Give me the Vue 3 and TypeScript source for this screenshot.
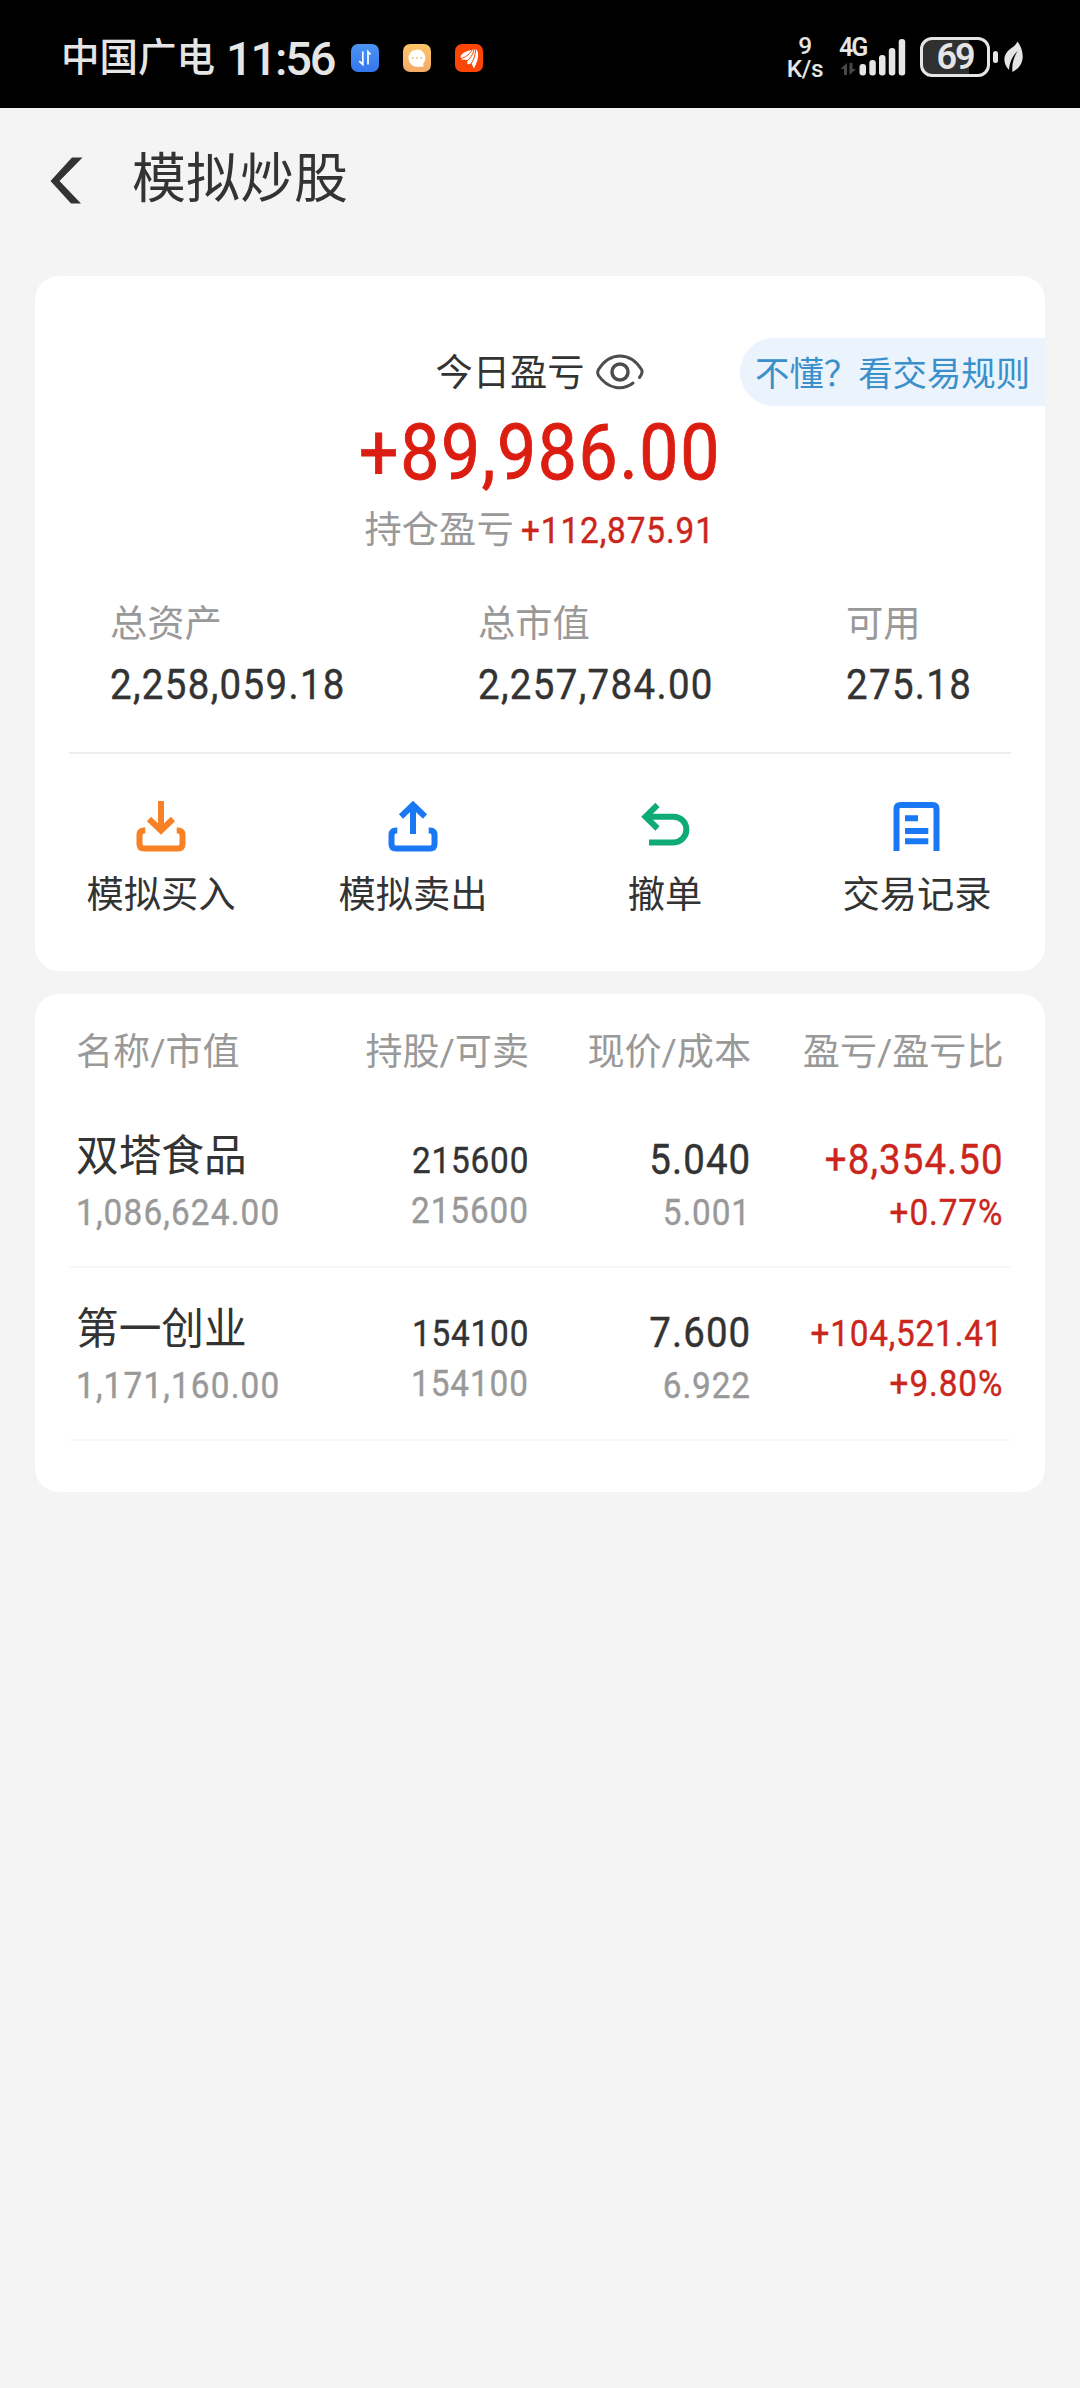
<script setup lang="ts">
interface Stat {
  label: string
  value: string
}

interface Action {
  key: 'buy' | 'sell' | 'cancel' | 'record'
  label: string
}

interface Holding {
  name: string
  marketValue: string
  shares: string
  sellable: string
  price: string
  cost: string
  profit: string
  ratio: string
}

const stats: Stat[] = [
  { label: '总资产', value: '2,258,059.18' },
  { label: '总市值', value: '2,257,784.00' },
  { label: '可用', value: '275.18' },
]

const actions: Action[] = [
  { key: 'buy', label: '模拟买入' },
  { key: 'sell', label: '模拟卖出' },
  { key: 'cancel', label: '撤单' },
  { key: 'record', label: '交易记录' },
]

const headers: string[] = ['名称/市值', '持股/可卖', '现价/成本', '盈亏/盈亏比']

const holdings: Holding[] = [
  {
    name: '双塔食品',
    marketValue: '1,086,624.00',
    shares: '215600',
    sellable: '215600',
    price: '5.040',
    cost: '5.001',
    profit: '+8,354.50',
    ratio: '+0.77%',
  },
  {
    name: '第一创业',
    marketValue: '1,171,160.00',
    shares: '154100',
    sellable: '154100',
    price: '7.600',
    cost: '6.922',
    profit: '+104,521.41',
    ratio: '+9.80%',
  },
]

// Long amounts drop to the smaller size so they stay inside their column.
const isLong = (text: string): boolean => text.length > 9
</script>

<template>
  <div class="screen">
    <header class="status">
      <span class="carrier">中国广电</span>
      <span class="clock">11:56</span>
      <div class="notices">
        <svg width="28" height="28" viewBox="0 0 28 28">
          <defs>
            <linearGradient id="blueApp" x1="0" y1="0" x2="0" y2="1">
              <stop offset="0" stop-color="#4a94f2" />
              <stop offset="1" stop-color="#3575ec" />
            </linearGradient>
          </defs>
          <rect width="28" height="28" rx="7" fill="url(#blueApp)" />
          <path d="M11.8 7.5V20.5L8.2 17.2M17 20.5V7.7L19.6 10.5" fill="none" stroke="#fff" stroke-width="1.7" />
        </svg>
        <svg width="28" height="28" viewBox="0 0 28 28">
          <defs>
            <linearGradient id="chatApp" x1="0" y1="0" x2="0" y2="1">
              <stop offset="0" stop-color="#fdc568" />
              <stop offset="1" stop-color="#f3aa68" />
            </linearGradient>
          </defs>
          <rect width="28" height="28" rx="7" fill="url(#chatApp)" />
          <path d="M14 5.500a8.600 8.600 0 1 0 0 17.200h6.300v-3a8.600 8.600 0 0 0-6.300-14.200z" fill="#fff" />
          <circle cx="9.800" cy="14" r="1" fill="#eec28c" />
          <circle cx="14" cy="14" r="1" fill="#eec28c" />
          <circle cx="18.200" cy="14" r="1" fill="#eec28c" />
        </svg>
        <svg width="28" height="28" viewBox="0 0 28 28">
          <rect width="28" height="28" rx="7" fill="#fb4605" />
          <path d="M5.500 12.500C7.500 8.500 12 6 21.500 5.500C24 9 24 15 19 24.500L16.500 19.500L12.500 20.500L12 16L6.500 15.500Z" fill="#fff" />
          <path d="M6 14.500C10 13.500 14 11 17 6M11.500 17.500C15 14.500 18 11 18.800 6M15.500 21C18.500 16 20.500 12 20.500 5.500" fill="none" stroke="#fb4605" stroke-width="1" />
        </svg>
      </div>

      <div class="speed">
        <span>9</span>
        <span>K/s</span>
      </div>
      <div class="network">
        <span class="generation">4G</span>
        <svg width="68" height="40" viewBox="0 0 68 40">
          <path d="M8 38V26L1.500 32H5V38zM10.500 26V38L17 32H13.500V26z" fill="#484848" />
          <g fill="#e5e5e5">
            <rect x="20.500" y="27" width="6.500" height="11.500" rx="3" />
            <rect x="30.300" y="23" width="6.500" height="15.500" rx="3" />
            <rect x="40" y="18" width="6.500" height="20.500" rx="3" />
            <rect x="49.800" y="11" width="6.500" height="27.500" rx="3" />
            <rect x="59.700" y="2" width="6.500" height="36.500" rx="3" />
          </g>
        </svg>
      </div>
      <div class="battery"><span>69</span></div>
      <i class="nub"></i>
      <svg class="leaf" width="20" height="32" viewBox="0 0 20 32">
        <path d="M13.500 0.500C20 9 22.500 24 8.500 31C7.500 24 9.500 16.500 13.500 10C8.500 15 5.500 21.500 5 29C-1 23 -1.500 14 5.500 8.500C9.500 5.500 12 4 13.500 0.500Z" fill="#e5e5e5" />
      </svg>
    </header>

    <nav class="titlebar">
      <svg width="33" height="47" viewBox="0 0 33 47">
        <path d="M22 0.500H32.500L9.500 24L31 46.500H21L0.500 24z" fill="#333" />
      </svg>
      <h1>模拟炒股</h1>
    </nav>

    <main>
      <section class="card summary">
        <a class="rules">不懂？看交易规则</a>
        <div class="today">
          <span>今日盈亏</span>
          <svg width="50" height="38" viewBox="0 0 50 38" fill="none" stroke="#4d4d4d" stroke-width="3" stroke-linecap="round">
            <path d="M38 30C28.500 37.500 13.500 37 3.500 22.500Q1.800 19.600 3.500 16.500C15 -1.500 35 -1.500 46.500 16.500Q48.300 19.500 44.500 24.500" />
            <circle cx="25" cy="19" r="8" stroke-width="3.500" />
          </svg>
        </div>
        <div class="amount num">+89,986.00</div>
        <div class="position">
          <span class="muted">持仓盈亏</span>
          <span class="gain num">+112,875.91</span>
        </div>

        <div class="stats">
          <div v-for="s in stats" :key="s.label" class="stat">
            <span class="stat-label">{{ s.label }}</span>
            <span class="stat-value num">{{ s.value }}</span>
          </div>
        </div>

        <div class="divider"></div>

        <div class="actions">
          <div v-for="a in actions" :key="a.key" class="action">
            <svg v-if="a.key === 'buy'" width="56" height="56" viewBox="0 0 56 56" fill="none" stroke="#f88125" stroke-width="6">
              <path d="M28 3V33" />
              <path d="M16 21L28 32.500L40 21" />
              <path d="M12.300 32.500H11Q6.500 32.500 6.500 37V46Q6.500 50.500 11 50.500H45Q49.500 50.500 49.500 46V37Q49.500 32.500 45 32.500H43.700" />
            </svg>
            <svg v-else-if="a.key === 'sell'" width="56" height="56" viewBox="0 0 56 56" fill="none" stroke="#1b78f5" stroke-width="6">
              <path d="M28 6V36" />
              <path d="M16 18.500L28 7L40 18.500" />
              <path d="M12.300 32.500H11Q6.500 32.500 6.500 37V46Q6.500 50.500 11 50.500H45Q49.500 50.500 49.500 46V37Q49.500 32.500 45 32.500H43.700" />
            </svg>
            <svg v-else-if="a.key === 'cancel'" width="56" height="56" viewBox="0 0 56 56" fill="none" stroke="#0eab76" stroke-width="6">
              <path d="M20.500 7L8.500 18.700L20.500 30.500" />
              <path d="M9 18.700H36.500A12.900 12.900 0 0 1 36.500 44.500H12" />
            </svg>
            <svg v-else width="56" height="56" viewBox="0 0 56 56" fill="none" stroke="#1b78f5" stroke-width="6">
              <path d="M7.500 53V11Q7.500 7 11.500 7H43.500Q47.500 7 47.500 11V53" />
              <path d="M16 20.200H29M16 33H39.300M16 43.200H39.300" />
            </svg>
            <span>{{ a.label }}</span>
          </div>
        </div>
      </section>

      <section class="card holdings">
        <div class="grid head">
          <span v-for="h in headers" :key="h">{{ h }}</span>
        </div>
        <div v-for="h in holdings" :key="h.name" class="grid row">
          <div class="cell">
            <span class="name">{{ h.name }}</span>
            <span class="sub num wide">{{ h.marketValue }}</span>
          </div>
          <div class="cell compact">
            <span class="main num">{{ h.shares }}</span>
            <span class="sub num">{{ h.sellable }}</span>
          </div>
          <div class="cell">
            <span class="main num">{{ h.price }}</span>
            <span class="sub num">{{ h.cost }}</span>
          </div>
          <div class="cell profit" :class="{ compact: isLong(h.profit) }">
            <span class="main num">{{ h.profit }}</span>
            <span class="sub num">{{ h.ratio }}</span>
          </div>
        </div>
      </section>
    </main>
  </div>
</template>

<style>
body {
  background: #f4f4f4;
}
</style>

<style scoped>
.screen {
  width: 1080px;
  height: 2388px;
  overflow: hidden;
  background: #f4f4f4;
  color: #333;
  font-family: Roboto, 'Noto Sans CJK SC', sans-serif;
}

span,
a {
  white-space: nowrap;
}

svg {
  display: block;
  flex: none;
}

/* Condensed figures */
.num {
  font-weight: 400;
  -webkit-text-stroke: 0.4px currentColor;
  transform: scaleX(0.9);
}

.status {
  display: flex;
  align-items: flex-start;
  box-sizing: border-box;
  height: 108px;
  padding-left: 61px;
  background: #000;
  color: #e5e5e5;
}

.carrier {
  width: 165px;
  margin-top: 28px;
  font-size: 38.5px;
  font-weight: 500;
  line-height: 60px;
}

.clock {
  width: 125px;
  margin-top: 29px;
  font-size: 47px;
  line-height: 60px;
  font-weight: 500;
  letter-spacing: -2.2px;
}

.notices {
  display: flex;
  gap: 24px;
  width: 132px;
  margin-top: 44px;
}

.speed {
  display: flex;
  flex-direction: column;
  align-items: center;
  width: 40px;
  margin: 35px 0 0 302px;
  font-size: 24.5px;
  font-weight: 500;
  line-height: 22.5px;
  letter-spacing: -0.4px;
}

.network {
  position: relative;
  width: 68px;
  margin: 37px 0 0 14px;
}

.generation {
  position: absolute;
  left: 0;
  top: -1px;
  font-size: 25px;
  font-weight: 600;
  line-height: 24px;
  letter-spacing: -2px;
}

.battery {
  box-sizing: border-box;
  width: 70px;
  height: 40px;
  margin: 37px 0 0 13px;
  border: 3px solid #e5e5e5;
  border-radius: 12px;
  background: linear-gradient(90deg, #303030 46px, #000 46px);
  text-align: center;
  font-size: 36px;
  font-weight: 600;
  line-height: 35px;
  letter-spacing: -2px;
}

.nub {
  width: 5px;
  height: 12px;
  margin: 51px 0 0 3px;
  border-radius: 3px;
  background: #e5e5e5;
}

.leaf {
  margin: 41px 0 0 6px;
}

.titlebar {
  display: flex;
  align-items: flex-start;
  height: 168px;
  padding-left: 50px;
}

.titlebar svg {
  margin-top: 49px;
}

h1 {
  margin: 37px 0 0 49px;
  font-size: 54px;
  font-weight: 400;
  line-height: 70px;
}

main {
  display: flex;
  flex-direction: column;
  gap: 23px;
  padding: 0 35px;
}

.card {
  position: relative;
  box-sizing: border-box;
  border-radius: 24px;
  background: #fff;
}

.summary {
  height: 695px;
  padding-top: 67px;
}

.rules {
  position: absolute;
  top: 62px;
  right: 0;
  box-sizing: border-box;
  width: 305px;
  height: 68px;
  padding-left: 15px;
  border-radius: 34px 0 0 34px;
  background: #ebf3fc;
  color: #3a90ca;
  font-size: 34.4px;
  line-height: 72px;
}

.today {
  display: flex;
  justify-content: center;
  align-items: center;
  gap: 10px;
  height: 60px;
  font-size: 37.3px;
  line-height: 60px;
}

.today svg {
  margin-top: -2px;
}

.amount {
  margin-top: 5px;
  color: #dc1d12;
  font-size: 77.4px;
  line-height: 90px;
  letter-spacing: 1.8px;
  text-align: center;
  -webkit-text-stroke-width: 0.9px;
}

.position {
  display: flex;
  height: 50px;
  gap: 7px;
  margin-top: 7px;
  padding-left: 329.5px;
  font-size: 37.3px;
  line-height: 50px;
}

.muted {
  color: #999;
}

.gain {
  color: #cb261c;
  font-size: 37px;
  line-height: 51px;
  letter-spacing: 1px;
  transform-origin: 0 50%;
}

.stats {
  display: grid;
  grid-template-columns: 368px 368px 1fr;
  margin-top: 44px;
  padding-left: 75px;
}

.stat {
  display: flex;
  flex-direction: column;
  align-items: flex-start;
  gap: 5px;
}

.stat-label {
  color: #999;
  font-size: 37.3px;
  line-height: 50px;
}

.stat-value {
  font-size: 42.7px;
  line-height: 60px;
  letter-spacing: 1.5px;
  transform-origin: 0 50%;
}

.divider {
  height: 2px;
  margin: 38px 34px 0;
  background: #ededed;
}

.actions {
  display: grid;
  grid-template-columns: repeat(4, 252px);
  margin-top: 44px;
}

.action {
  display: flex;
  flex-direction: column;
  align-items: center;
  gap: 16px;
  font-size: 37.3px;
  line-height: 50px;
}

.holdings {
  height: 498px;
  padding: 34px 34px 0;
}

.grid {
  display: grid;
  grid-template-columns: 230px 223px 222px 252.5px;
  padding-left: 7px;
}

.grid > :not(:first-child) {
  text-align: right;
}

.head {
  margin-bottom: 17px;
  color: #999;
  font-size: 37.1px;
  line-height: 50px;
}

.row {
  box-sizing: border-box;
  height: 173px;
  padding-top: 34px;
  border-bottom: 2px solid #f8f8f8;
}

.cell {
  display: flex;
  flex-direction: column;
  align-items: flex-end;
}

.cell:first-child {
  align-items: flex-start;
}

.cell .num {
  transform-origin: 100% 50%;
}

.cell:first-child .num {
  transform-origin: 0 50%;
}

.name {
  margin-bottom: 6px;
  font-size: 42.7px;
  line-height: 54px;
}

.main {
  font-size: 42.7px;
  line-height: 60px;
  letter-spacing: 1.2px;
}

.sub {
  color: #999;
  font-size: 37px;
  line-height: 47px;
  letter-spacing: 1px;
}

.sub.wide {
  letter-spacing: 1.3px;
}

.compact {
  padding-top: 7px;
}

.compact .main {
  font-size: 37px;
  line-height: 50px;
  letter-spacing: 0.9px;
}

.compact .sub {
  line-height: 50px;
}

.profit .main,
.profit .sub {
  color: #cb261c;
}
</style>
